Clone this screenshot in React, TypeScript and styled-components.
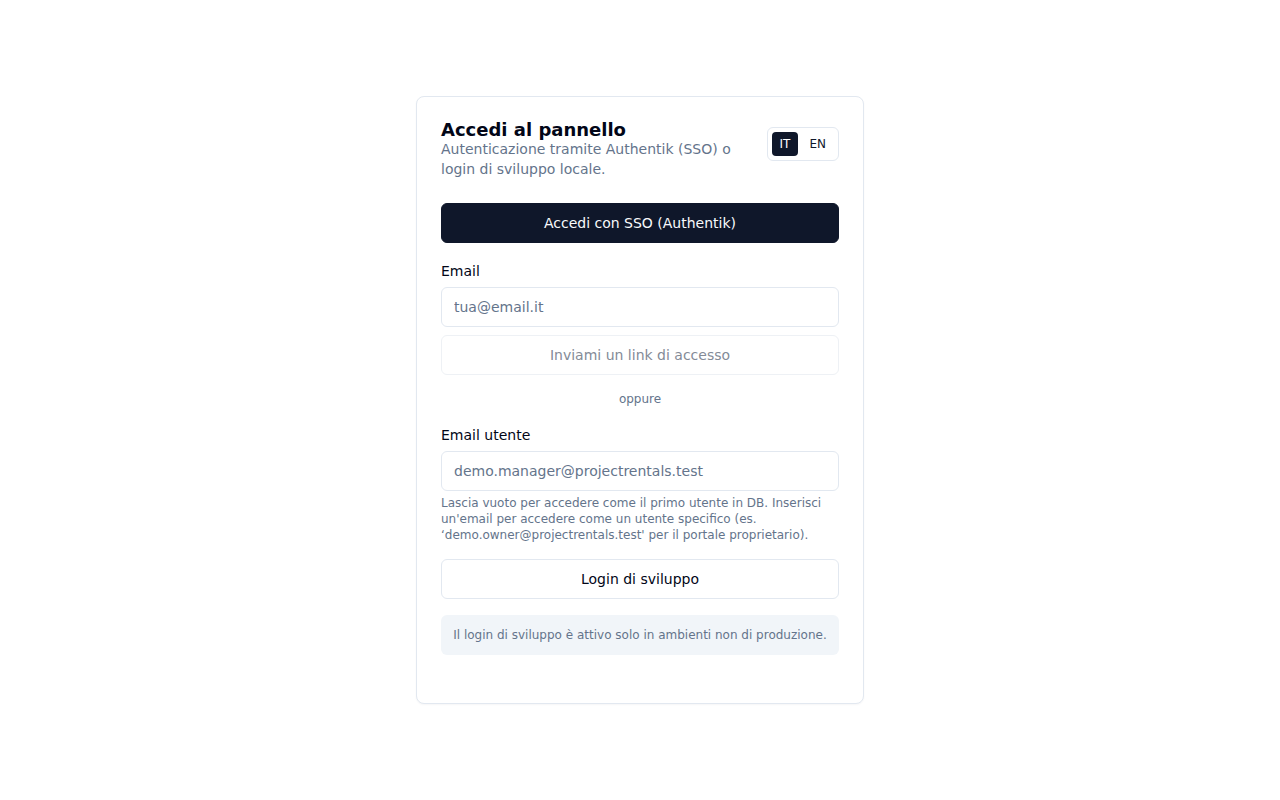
import React from "react";
import styled, { createGlobalStyle } from "styled-components";

const Global = createGlobalStyle`
  * { box-sizing: border-box; }
  html, body { margin: 0; padding: 0; background: #ffffff; }
  body { font-family: "DejaVu Sans", "Liberation Sans", sans-serif; color: #0f172a; }
`;

const Page = styled.div`
  min-height: 800px;
  display: flex;
  align-items: center;
  justify-content: center;
`;

const Card = styled.div`
  width: 448px;
  border: 1px solid #e2e8f0;
  border-radius: 8px;
  background: #fff;
  padding: 24px 24px 48px;
  box-shadow: 0 1px 2px rgba(15, 23, 42, 0.04);
`;

const Header = styled.div`
  display: flex;
  justify-content: space-between;
  align-items: flex-start;
`;

const TitleBlock = styled.div`
  width: 300px;
`;

const Title = styled.h1`
  margin: 0;
  font-size: 18px;
  line-height: 18px;
  font-weight: 700;
  color: #020617;
`;

const Subtitle = styled.p`
  margin: 0;
  font-size: 14px;
  line-height: 20px;
  color: #64748b;
`;

const Toggle = styled.div`
  margin-top: 6px;
  display: flex;
  gap: 3px;
  padding: 4px;
  border: 1px solid #e2e8f0;
  border-radius: 6px;
`;

const ToggleBtn = styled.button<{ $active?: boolean }>`
  font-family: inherit;
  font-size: 12px;
  height: 24px;
  padding: 0 8px;
  border: none;
  border-radius: 4px;
  background: ${(p) => (p.$active ? "#0f172a" : "transparent")};
  color: ${(p) => (p.$active ? "#ffffff" : "#0f172a")};
  cursor: pointer;
`;

const Button = styled.button<{ $variant?: "primary" | "outline" | "disabled"; $mt?: number }>`
  display: block;
  width: 100%;
  height: 40px;
  margin-top: ${(p) => p.$mt ?? 0}px;
  font-family: inherit;
  font-size: 14px;
  border-radius: 6px;
  border: 1px solid
    ${(p) => (p.$variant === "primary" ? "#0f172a" : p.$variant === "disabled" ? "#eef1f5" : "#e2e8f0")};
  background: ${(p) => (p.$variant === "primary" ? "#0f172a" : "#ffffff")};
  color: ${(p) => (p.$variant === "primary" ? "#f8fafc" : p.$variant === "disabled" ? "#848b97" : "#020617")};
  cursor: ${(p) => (p.$variant === "disabled" ? "not-allowed" : "pointer")};
`;

const Label = styled.label<{ $mt: number }>`
  display: block;
  margin-top: ${(p) => p.$mt}px;
  font-size: 14px;
  line-height: 20px;
  color: #020617;
`;

const Input = styled.input`
  display: block;
  width: 100%;
  height: 40px;
  margin-top: 6px;
  padding: 0 12px;
  font-family: inherit;
  font-size: 14px;
  color: #0f172a;
  border: 1px solid #e2e8f0;
  border-radius: 6px;
  outline: none;
  &::placeholder { color: #64748b; }
`;

const Divider = styled.div`
  margin-top: 16px;
  text-align: center;
  font-size: 12px;
  line-height: 16px;
  color: #64748b;
`;

const Help = styled.p`
  margin: 4px 0 0;
  font-size: 12px;
  line-height: 16px;
  color: #64748b;
`;

const Note = styled.div`
  margin-top: 16px;
  padding: 12px;
  border-radius: 6px;
  background: #f1f5f9;
  font-size: 12px;
  line-height: 16px;
  color: #64748b;
  text-align: center;
`;

export default function App() {
  return (
    <>
      <Global />
      <Page>
        <Card>
          <Header>
            <TitleBlock>
              <Title>Accedi al pannello</Title>
              <Subtitle>Autenticazione tramite Authentik (SSO) o login di sviluppo locale.</Subtitle>
            </TitleBlock>
            <Toggle>
              <ToggleBtn $active>IT</ToggleBtn>
              <ToggleBtn>EN</ToggleBtn>
            </Toggle>
          </Header>
          <Button $variant="primary" $mt={24}>Accedi con SSO (Authentik)</Button>
          <Label $mt={18}>Email</Label>
          <Input placeholder="tua@email.it" />
          <Button $variant="disabled" $mt={8} disabled>Inviami un link di accesso</Button>
          <Divider>oppure</Divider>
          <Label $mt={18}>Email utente</Label>
          <Input placeholder="demo.manager@projectrentals.test" />
          <Help>
            Lascia vuoto per accedere come il primo utente in DB. Inserisci un'email per accedere come un utente specifico (es. ‘demo.owner@projectrentals.test' per il portale proprietario).
          </Help>
          <Button $variant="outline" $mt={16}>Login di sviluppo</Button>
          <Note>Il login di sviluppo è attivo solo in ambienti non di produzione.</Note>
        </Card>
      </Page>
    </>
  );
}
